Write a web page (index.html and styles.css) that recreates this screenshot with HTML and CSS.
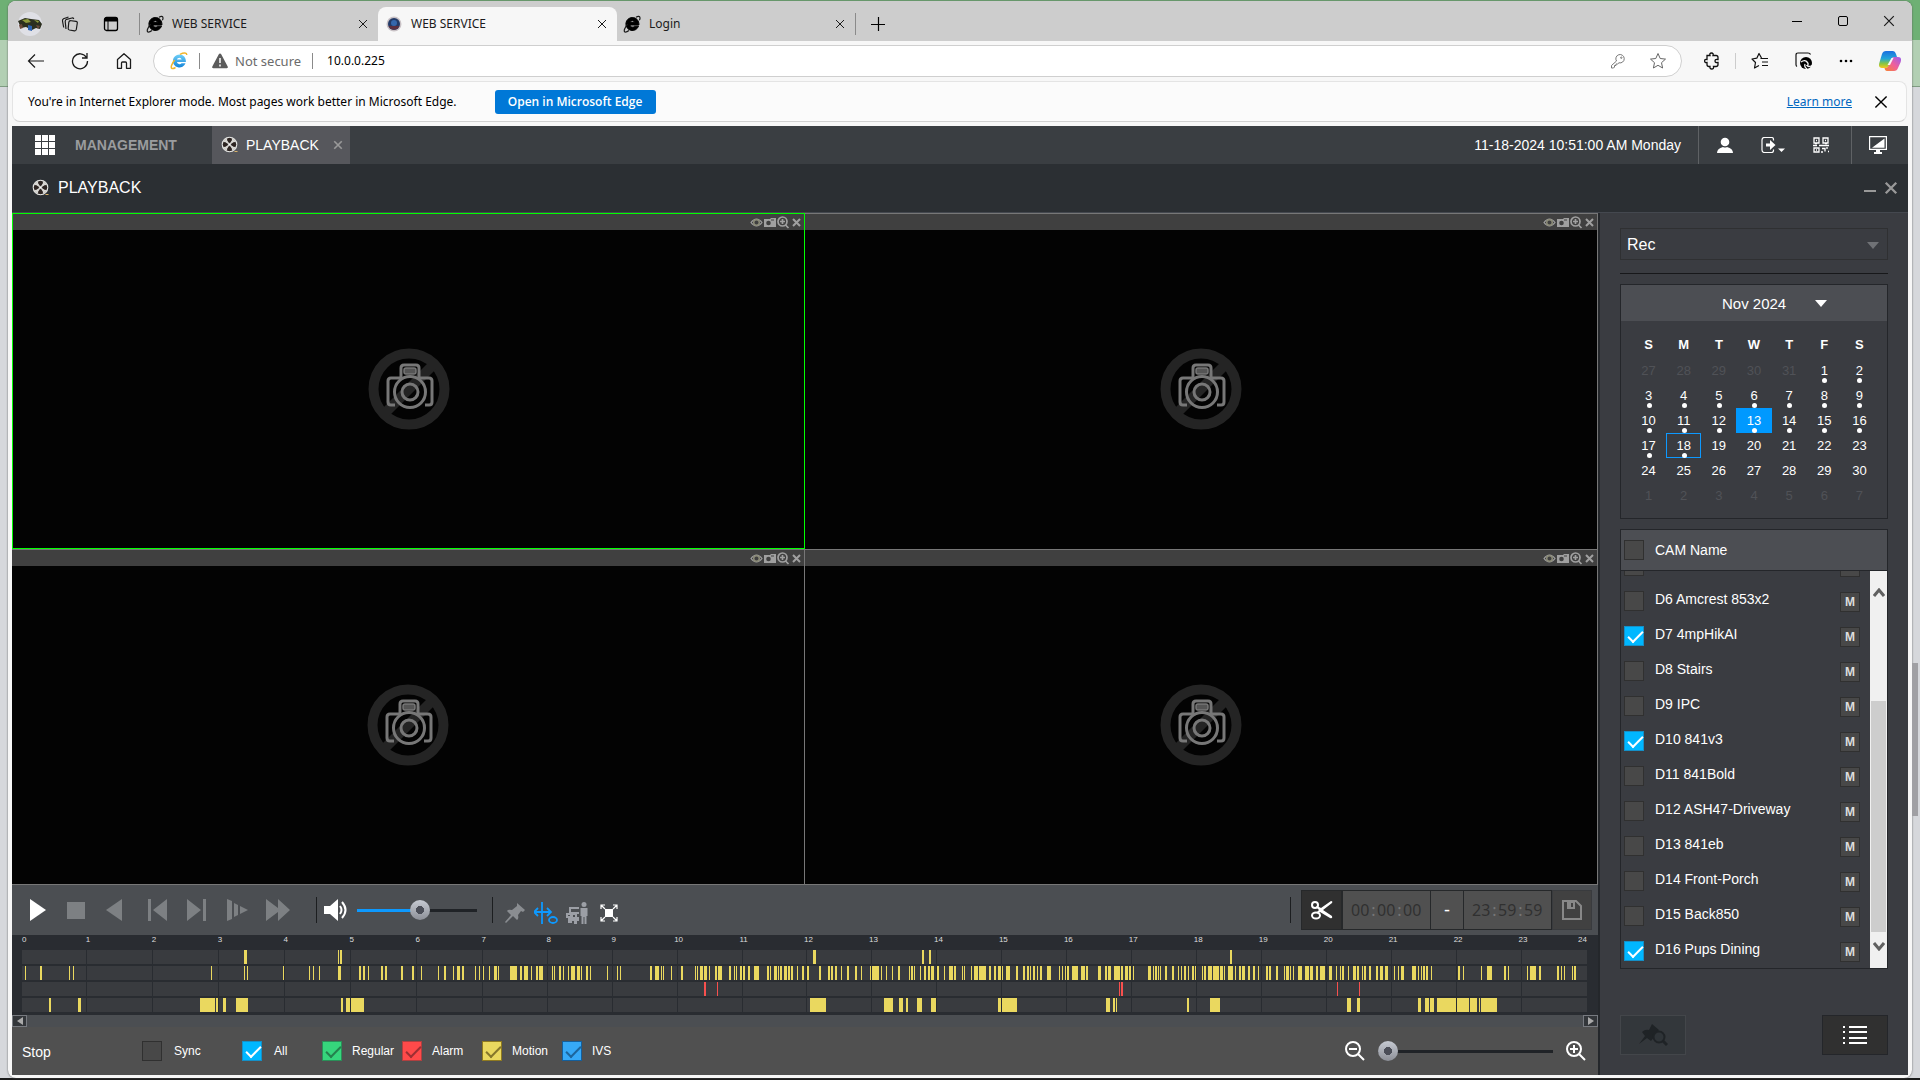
FILE: index.html
```html
<!DOCTYPE html>
<html lang="en">
<head>
<meta charset="utf-8">
<title>WEB SERVICE</title>
<link rel="stylesheet" href="styles.css">
</head>
<body>
<svg class="defs" aria-hidden="true">
  <defs>
    <linearGradient id="ieBlue" x1="0" y1="0" x2="0" y2="1"><stop offset="0" stop-color="#6fd0f8"/><stop offset="1" stop-color="#1584d8"/></linearGradient>
    <linearGradient id="cpTop" x1="0" y1="0" x2="0" y2="1"><stop offset="0" stop-color="#1b6fe0"/><stop offset=".45" stop-color="#22a6d8"/><stop offset=".75" stop-color="#8cc63f"/><stop offset="1" stop-color="#f7c81e"/></linearGradient>
    <linearGradient id="cpBottom" x1="1" y1="0" x2="0" y2="1"><stop offset="0" stop-color="#9a5cf0"/><stop offset=".5" stop-color="#f0609a"/><stop offset="1" stop-color="#f7842e"/></linearGradient>
    <symbol id="x" viewBox="0 0 10 10"><path d="M1 1l8 8M9 1l-8 8" fill="none" stroke="currentColor"/></symbol>
    <symbol id="xb" viewBox="0 0 12 12"><path d="M1.500 1.500l9 9M10.500 1.500l-9 9" fill="none" stroke="currentColor" stroke-width="2"/></symbol>
    <symbol id="ie" viewBox="0 0 18 18"><path d="M9.300 2.500a6.500 6.500 0 1 0 6.200 8.700h-4a2.600 2.600 0 0 1-4.600-1.200h9C16.200 5.600 13.300 2.500 9.300 2.500zM6.900 7.600a2.500 2.500 0 0 1 4.800 0z" fill="#000" fill-rule="evenodd" stroke="#000"/><path d="M13 2.200c2.200-1.200 3.800-1 4 .6.100.8-.2 1.700-.6 2.500M4.600 9.200C1.500 12.800.4 16.500 2 17c1 .3 2.500-.4 4-1.500" fill="none" stroke="currentColor" stroke-width="1.200"/></symbol>
    <symbol id="film" viewBox="0 0 18 18"><circle cx="8.500" cy="8.500" r="7.200" fill="#3b3634" stroke="#e2e2e0" stroke-width="1.300"/><g transform="rotate(45 8.500 8.500)"><g fill="#d8d7d3"><path d="M8.500 8.500L6 1.700h5zM8.500 8.500L6 15.300h5zM8.500 8.500L1.700 6v5zM8.500 8.500l6.800-2.500v5z"/></g><g fill="#2d2421"><circle cx="5.300" cy="5.300" r="2.200"/><circle cx="11.700" cy="5.300" r="2.200"/><circle cx="5.300" cy="11.700" r="2.200"/><circle cx="11.700" cy="11.700" r="2.200"/></g></g><circle cx="8.500" cy="8.500" r="1.200" fill="#fff"/><path d="M13.500 15.500h3" stroke="#d8b26a"/></symbol>
    <symbol id="tools" viewBox="0 0 52 14"><g fill="none" stroke="#a0a0a0"><path d="M1 7.500q5.500-7 11 0q-5.500 7-11 0z" stroke-width="1.200"/><circle cx="6.500" cy="7.500" r="2.800" stroke="#8c8c78" stroke-width="1.500"/><circle cx="32.500" cy="6.500" r="4.500" stroke-width="1.700"/><path d="M30 6.500h5M32.500 4v5M35.500 10l3 3" stroke-width="1.700"/><path d="M43 4l7 7M50 4l-7 7" stroke-width="2"/></g><path d="M14 4h6l1-1h5v9H14z" fill="#a0a0a0"/><circle cx="18.500" cy="8" r="2.300" fill="#404040"/><path d="M21 5h3" stroke="#404040"/></symbol>
    <symbol id="nocam" viewBox="0 0 82 82"><circle cx="41" cy="41" r="35.500" fill="none" stroke="#242424" stroke-width="10"/><path d="M64 18L18 64" stroke="#242424" stroke-width="10"/><g fill="none" stroke="#777" stroke-width="3"><path d="M27 57h-4q-3 0-3-3V33q0-3 3-3h10V20q0-3 3-3h12q3 0 3 3v10h10q3 0 3 3v21q0 3-3 3h-4"/><circle cx="42" cy="44" r="15.500"/><circle cx="42" cy="44" r="8"/></g><rect x="36" y="20" width="12" height="6" rx="2" fill="#555" stroke="#777" stroke-width="1.500"/></symbol>
  </defs>
</svg>

<div class="browser">
  <header class="tabstrip">
    <div class="strip-tools">
      <button class="plain" aria-label="Profile"><svg width="26" height="26" viewBox="0 0 26 26"><circle cx="13" cy="13" r="12" fill="#dfe0e6"/><path d="M1 10l7-3 6 1 8 1 3 4-2 5-4-1-4 2-6-3-5 1z" fill="#2c2f1f"/><path d="M5 9l6-1 3 3-5 1zM17 9l5 1-1 2z" fill="#8d9a3c"/><path d="M11 14l4 1v5l-4-1z" fill="#2d62b0"/><path d="M2 14l3-1 1 4-3 1zM19 14l4 1-2 3z" fill="#6c4a3a"/></svg></button>
      <button class="plain" aria-label="Workspaces"><svg width="18" height="18" viewBox="0 0 18 18" fill="none" stroke="#1b1b1b" stroke-width="1.200"><path d="M8.500 5.500l6.500.8q1.500.2 1.300 1.700l-1 6.500q-.3 1.500-1.800 1.300l-5-.8q-1.500-.3-1.300-1.700l.6-6q.2-1.500 1.700-1.300M5 14l-.8-7.500q0-1.700 1.500-2.200L11 3q1.300-.2 1.800 1M2.700 12.500L1.500 6q-.3-1.500 1-2.200L7.500 2"/></svg></button>
      <button class="plain" aria-label="Tab actions"><svg width="16" height="16" viewBox="0 0 16 16"><rect x="1.500" y="1.500" width="13" height="13" rx="2" fill="none" stroke="#000" stroke-width="1.300"/><path d="M1.500 5.500V3q0-1.500 1.500-1.500h10q1.500 0 1.500 1.500v2.500z"/><path d="M5 5v9" stroke="#000"/></svg></button>
    </div>
    <div class="tab"><svg width="18" height="18"><use href="#ie"/></svg><span>WEB SERVICE</span><button class="plain" aria-label="Close tab"><svg width="10" height="10"><use href="#x"/></svg></button></div>
    <div class="tab tab-active"><svg width="18" height="18" viewBox="0 0 18 18"><circle cx="9" cy="9" r="7.500" fill="#c9c2c6"/><circle cx="9" cy="9" r="6" fill="#233a68"/><circle cx="9" cy="8" r="3" fill="#3567ac"/><path d="M3.500 11h11a6 6 0 0 1-11 0z" fill="#5c3040"/></svg><span>WEB SERVICE</span><button class="plain" aria-label="Close tab"><svg width="10" height="10"><use href="#x"/></svg></button></div>
    <div class="tab tab-last"><svg width="18" height="18"><use href="#ie"/></svg><span>Login</span><button class="plain" aria-label="Close tab"><svg width="10" height="10"><use href="#x"/></svg></button></div>
    <button class="plain new-tab" aria-label="New tab"><svg width="16" height="16" viewBox="0 0 16 16"><path d="M8.500 1v14M1 8.500h14" stroke="#000" stroke-width="1.200"/></svg></button>
    <div class="win-buttons">
      <button class="plain" aria-label="Minimize"><svg width="10" height="10"><path d="M0 5.500h10" stroke="#000"/></svg></button>
      <button class="plain" aria-label="Maximize"><svg width="10" height="10"><rect x=".5" y=".5" width="9" height="9" rx="1.500" fill="none" stroke="#000"/></svg></button>
      <button class="plain" aria-label="Close"><svg width="12" height="12"><use href="#x"/></svg></button>
    </div>
  </header>

  <div class="toolbar">
    <div class="nav-buttons">
      <button class="plain" aria-label="Back"><svg width="18" height="18" viewBox="0 0 18 18" fill="none" stroke="#1b1b1b" stroke-width="1.200"><path d="M17 9H1.500M8 2.500L1.500 9 8 15.500"/></svg></button>
      <button class="plain" aria-label="Refresh"><svg width="18" height="18" viewBox="0 0 18 18" fill="none" stroke="#1b1b1b" stroke-width="1.300"><path d="M15.500 5.500A7.500 7.500 0 1 0 16.500 9M16 1v5h-5"/></svg></button>
      <button class="plain" aria-label="Home"><svg width="18" height="18" viewBox="0 0 18 18" fill="none" stroke="#1b1b1b" stroke-width="1.300"><path d="M2.500 7.500L9 1.700l6.500 5.800v8.800h-4V11q0-1-1-1h-3q-1 0-1 1v5.300h-4z" stroke-linejoin="round"/></svg></button>
    </div>
    <div class="address">
      <svg width="18" height="18" viewBox="0 0 18 18"><path d="M9.300 2.500a6.500 6.500 0 1 0 6.200 8.700h-4a2.600 2.600 0 0 1-4.600-1.200h9C16.200 5.600 13.300 2.500 9.300 2.500zM6.900 7.600a2.500 2.500 0 0 1 4.800 0z" fill="url(#ieBlue)" fill-rule="evenodd"/><path d="M10 2.300c4-2 6.800-1.700 6.800.6M4.600 8C1.500 12 .4 16 2 16.500c1 .3 2.500-.4 3.500-1" fill="none" stroke="#f3b62c" stroke-width="1.500"/></svg>
      <i class="bar"></i>
      <svg width="18" height="18" viewBox="0 0 18 18"><path d="M9 1.500q.8 0 1.200.8l6.500 12.200q.8 1.800-1 1.800H2.300q-1.800 0-1-1.800L7.800 2.300q.4-.8 1.200-.8z" fill="#5c5c5c"/><path d="M9 6v5M9 12.500v2" stroke="#fff" stroke-width="1.500"/></svg>
      <span class="muted">Not secure</span>
      <i class="bar"></i>
      <input class="url" aria-label="Address" value="10.0.0.225">
      <button class="plain" aria-label="Passwords"><svg width="16" height="16" viewBox="0 0 16 16" fill="none" stroke="#777"><path d="M6.500 8A4.200 4.200 0 1 1 9 9.800L7.500 11H6v1.500H4.500V14L3.500 15H1.500v-2.500z"/><circle cx="11.300" cy="4.700" r=".7"/></svg></button>
      <button class="plain" aria-label="Favorite"><svg width="18" height="18" viewBox="0 0 18 18" fill="none" stroke="#666"><path d="M9 1.500l2.200 5 5.300.6-4 3.600 1.100 5.300L9 13.300 4.400 16l1.100-5.300-4-3.600 5.300-.6z" stroke-linejoin="round"/></svg></button>
    </div>
    <div class="browser-tools">
      <button class="plain" aria-label="Extensions"><svg width="16" height="18" viewBox="0 0 16 18" fill="none" stroke="#111" stroke-width="1.300"><path d="M3 3.500h3q-.7-2.500 1.500-2.500T9 3.500h3q2 0 2 2v2q-3-.6-3 1.500t3 1.500v2q0 2-2 2H9.500q.5 2.500-1.700 2.500T6 14.500H5q-2 0-2-2v-2q-2.400.5-2.400-1.500T3 7.500z"/></svg></button>
      <i class="bar"></i>
      <button class="plain" aria-label="Favorites"><svg width="18" height="18" viewBox="0 0 18 18" fill="none" stroke="#111" stroke-width="1.200"><path d="M10.500 6L8 1.500 5.800 6.200 1 7l3.500 3.500L3.500 16 8 13.500M9.500 6.500h7.500M11 10h6M11 13.500h6" stroke-linejoin="round"/></svg></button>
      <button class="plain" aria-label="Internet Explorer mode"><svg width="18" height="18" viewBox="0 0 18 18"><path d="M2 14.500q-1-.5-1-2V3q0-2 2-2h10q2 0 2.500 1.500" fill="none" stroke="#111" stroke-width="1.200"/><circle cx="11" cy="11" r="6" /><path d="M6 10q4-3 6.500.5 1.500 2-.5 3 2 2 5 0M10 12q-1 3 2 5" fill="none" stroke="#f7f7f7" stroke-width="1.300"/></svg></button>
      <button class="plain" aria-label="Settings"><svg width="14" height="4" viewBox="0 0 14 4"><circle cx="2" cy="2" r="1.300"/><circle cx="7" cy="2" r="1.300"/><circle cx="12" cy="2" r="1.300"/></svg></button>
      <button class="plain" aria-label="Copilot"><svg width="22" height="20" viewBox="0 0 22 20"><path d="M7 0h7q2 0 3 3l1 3h-3q-2 0-3 3l-2 6q-1 2-3 2H3q-4 0-2.700-5L3 3q1-3 4-3z" fill="url(#cpTop)"/><path d="M15 20H8q-2 0-2.500-3H7q2 0 3-3l2-5q1-3 3-3h4q4 0 2.700 5L19 17q-1 3-4 3z" fill="url(#cpBottom)"/><path d="M12.500 7h2L11 14H8.500z" fill="#f7f7f7"/></svg></button>
    </div>
  </div>

  <div class="infobar">
    <span>You're in Internet Explorer mode. Most pages work better in Microsoft Edge.</span>
    <button class="edge-button">Open in Microsoft Edge</button>
    <a class="learn" href="#learn">Learn more</a>
    <button class="plain" aria-label="Dismiss"><svg width="14" height="14"><use href="#x"/></svg></button>
  </div>

  <div class="app">
    <nav class="app-nav">
      <button class="plain grid-button" aria-label="Menu"><svg width="20" height="20" viewBox="0 0 20 20" fill="#fff"><path d="M0 0h6v6H0zM7 0h6v6H7zM14 0h6v6h-6zM0 7h6v6H0zM7 7h6v6H7zM14 7h6v6h-6zM0 14h6v6H0zM7 14h6v6H7zM14 14h6v6h-6z"/></svg></button>
      <a class="nav-link" href="#management">MANAGEMENT</a>
      <div class="nav-tab"><svg width="18" height="18"><use href="#film"/></svg><span>PLAYBACK</span><button class="plain" aria-label="Close playback"><svg width="10" height="10"><use href="#xb"/></svg></button></div>
      <time class="clock">11-18-2024 10:51:00 AM Monday</time>
      <div class="nav-group">
        <button class="plain" aria-label="User"><svg width="16" height="16" viewBox="0 0 16 16" fill="#fff"><circle cx="8" cy="5" r="4.300"/><path d="M0 16q0-4.500 6-6 2 1 4 0 6 1.500 6 6z"/></svg></button>
        <button class="plain" aria-label="Log out"><svg width="24" height="16" viewBox="0 0 24 16"><path d="M12.500 3.500V2.500q0-2-2-2h-7q-2.500 0-2.500 2.500v10q0 2.500 2.500 2.500h7q2 0 2-2v-1" fill="none" stroke="#fff" stroke-width="1.200"/><path d="M5 6.500h4V3l5.500 5L9 13V9.500H5z" fill="#fff"/><path d="M17 11.500h7L20.500 15z" fill="#fff"/></svg></button>
        <button class="plain" aria-label="QR code"><svg width="16" height="16" viewBox="0 0 16 16" fill="none" stroke="#fff" stroke-width="1.300"><path d="M1 1h5v5H1zM10 1h5v5h-5zM1 11h5v4H1zM3 3.500h1M12 3.500h1M3 13h1M0 8.500h4M6 8.500h10M9 11.500h3v3M14 10v2M15 14.500h1M8 15h2M2 6.500h2M12 6.500h2"/></svg></button>
      </div>
      <button class="plain screen-button" aria-label="Display"><svg width="18" height="18" viewBox="0 0 18 18"><path d="M.6.6h16.800v12.800H.6z" fill="none" stroke="#fff" stroke-width="1.200"/><path d="M15.500 2.500v9.300H3zM7 14h4v2h2v2H5v-2h2z" fill="#fff"/></svg></button>
    </nav>
    <div class="page-title">
      <svg width="18" height="18"><use href="#film"/></svg><h1>PLAYBACK</h1>
      <button class="plain" aria-label="Minimize page"><svg width="12" height="12"><path d="M0 9h12" stroke="#999" stroke-width="2"/></svg></button>
      <button class="plain" aria-label="Close page"><svg width="14" height="14"><use href="#xb"/></svg></button>
    </div>

    <div class="content">
      <main class="player">
        <div class="views">
          <section class="view view-selected"><div class="view-bar"><svg width="52" height="14"><use href="#tools"/></svg></div><div class="view-body"><svg width="82" height="82"><use href="#nocam"/></svg></div></section>
          <section class="view"><div class="view-bar"><svg width="52" height="14"><use href="#tools"/></svg></div><div class="view-body"><svg width="82" height="82"><use href="#nocam"/></svg></div></section>
          <section class="view"><div class="view-bar"><svg width="52" height="14"><use href="#tools"/></svg></div><div class="view-body"><svg width="82" height="82"><use href="#nocam"/></svg></div></section>
          <section class="view"><div class="view-bar"><svg width="52" height="14"><use href="#tools"/></svg></div><div class="view-body"><svg width="82" height="82"><use href="#nocam"/></svg></div></section>
        </div>

        <div class="controls">
          <div class="transport">
            <button class="plain" aria-label="Play"><svg width="24" height="22" viewBox="0 0 24 22"><path d="M4 0l16 11L4 22z" fill="#fff"/></svg></button>
            <button class="plain" aria-label="Stop"><svg width="24" height="22" viewBox="0 0 24 22"><path d="M3 3h18v17H3z"/></svg></button>
            <button class="plain" aria-label="Reverse"><svg width="24" height="22" viewBox="0 0 24 22"><path d="M20 0L4 11l16 11z"/></svg></button>
            <button class="plain gap-l" aria-label="Previous frame"><svg width="24" height="22" viewBox="0 0 24 22"><path d="M2 0h3v22H2zM21 0L7 11l14 11z"/></svg></button>
            <button class="plain" aria-label="Next frame"><svg width="24" height="22" viewBox="0 0 24 22"><path d="M19 0h3v22h-3zM3 0l14 11L3 22z"/></svg></button>
            <button class="plain gap-s" aria-label="Slow"><svg width="24" height="22" viewBox="0 0 24 22"><path d="M2 0l5 2v18l-5 2zM9 4l4 2v10l-4 2zM15 7l8 4-8 4z"/></svg></button>
            <button class="plain gap-s" aria-label="Fast"><svg width="24" height="22" viewBox="0 0 24 22"><path d="M0 0l12 9V0l12 11-12 11v-9L0 22z"/></svg></button>
          </div>
          <div class="volume">
            <button class="plain" aria-label="Mute"><svg width="24" height="22" viewBox="0 0 24 22"><path d="M0 7h6l8-7v22l-8-7H0z" fill="#fff"/><path d="M16 7q3 4 0 8M18 3q7 8 0 16" fill="none" stroke="#fff" stroke-width="2"/></svg></button>
            <input class="slider slider-volume" type="range" min="0" max="100" value="53" aria-label="Volume">
          </div>
          <div class="modes">
            <button class="plain" aria-label="Pin"><svg width="22" height="22" viewBox="0 0 22 22" fill="#8a8d91"><path d="M13 1l8 7-2 2-2-1-3 4q1 4-1 5l-4-4-7 7-1-1 6-7-4-4q1-2 5-1l5-4z"/></svg></button>
            <button class="plain" aria-label="Sync mark"><svg width="24" height="22" viewBox="0 0 24 22" fill="none" stroke="#0d99ff" stroke-width="1.800"><path d="M8 0v22M0 10h17M4 6l-4 4 4 4M13 6l4 4-4 4"/><ellipse cx="19" cy="18" rx="4" ry="3"/></svg></button>
            <button class="plain" aria-label="Smart filter"><svg width="22" height="22" viewBox="0 0 22 22" fill="#9c9fa6"><circle cx="18" cy="2.500" r="2.500"/><path d="M14.500 6h7v8h-1v8h-2v-7h-1v7h-2v-8h-1z"/><path d="M3 5h10v2H5v3h8v2h-2v3h2v4h-2v3H8v-3H6v2H2v-5H0v-5h3zM2 13v1h2v-1zM7 13v2h2v-2z" fill-rule="evenodd"/></svg></button>
            <button class="plain" aria-label="Full screen"><svg width="18" height="18" viewBox="0 0 18 18"><path d="M5 5h8v8H5z" fill="#fff"/><path d="M1 5V1h4M13 1h4v4M17 13v4h-4M5 17H1v-4M1 1l4 4M17 1l-4 4M17 17l-4-4M1 17l4-4" fill="none" stroke="#fff" stroke-width="1.200"/></svg></button>
          </div>
          <div class="clip">
            <button class="clip-cut" aria-label="Cut"><svg width="22" height="20" viewBox="0 0 22 20"><g fill="none" stroke="#fff" stroke-width="2"><circle cx="4" cy="5" r="3"/><ellipse cx="5" cy="15.500" rx="4" ry="3"/></g><path d="M6 6l4 2 10-7q2 0 1 2l-9 7 9 6q1 3-2 2L9 12l-2 2-1-2 2-2-3-3z" fill="#fff"/></svg></button>
            <div class="clip-time"><input aria-label="Start hour" value="00"><i>:</i><input aria-label="Start minute" value="00"><i>:</i><input aria-label="Start second" value="00"></div>
            <span class="clip-dash">-</span>
            <div class="clip-time"><input aria-label="End hour" value="23"><i>:</i><input aria-label="End minute" value="59"><i>:</i><input aria-label="End second" value="59"></div>
            <button class="clip-save" aria-label="Save"><svg width="20" height="20" viewBox="0 0 20 20"><path d="M1 1h13l5 5v13H1z" fill="none" stroke="#888" stroke-width="2"/><path d="M5 1h8v8H5z" fill="#888"/><path d="M9 3h2v4H9z" fill="#414141"/></svg></button>
          </div>
        </div>

        <div class="timeline">
          <div class="hours" id="hours"></div>
          <div class="tracks" id="tracks"></div>
        </div>
        <div class="scroll-x">
          <button aria-label="Scroll left"><svg width="6" height="8"><path d="M6 0v8L0 4z" fill="#aaa"/></svg></button>
          <button aria-label="Scroll right"><svg width="6" height="8"><path d="M0 0v8l6-4z" fill="#aaa"/></svg></button>
        </div>

        <footer class="filters">
          <span class="status">Stop</span>
          <label class="filter filter-sync"><input class="check" type="checkbox"><span>Sync</span></label>
          <label class="filter"><input class="check" type="checkbox" checked><span>All</span></label>
          <label class="filter"><input class="check check-green" type="checkbox" checked><span>Regular</span></label>
          <label class="filter"><input class="check check-red" type="checkbox" checked><span>Alarm</span></label>
          <label class="filter"><input class="check check-yellow" type="checkbox" checked><span>Motion</span></label>
          <label class="filter"><input class="check check-blue" type="checkbox" checked><span>IVS</span></label>
          <div class="zoom">
            <button class="plain" aria-label="Zoom out"><svg width="20" height="20" viewBox="0 0 20 20" fill="none" stroke="#fff" stroke-width="2"><circle cx="8" cy="8" r="7"/><path d="M4 8h8M13 13l6 6"/></svg></button>
            <input class="slider slider-zoom" type="range" min="0" max="100" value="0" aria-label="Timeline zoom">
            <button class="plain" aria-label="Zoom in"><svg width="20" height="20" viewBox="0 0 20 20" fill="none" stroke="#fff" stroke-width="2"><circle cx="8" cy="8" r="7"/><path d="M4 8h8M8 4v8M13 13l6 6"/></svg></button>
          </div>
        </footer>
      </main>

      <aside class="sidebar">
        <div class="select-wrap"><select aria-label="Record type"><option>Rec</option></select></div>
        <section class="calendar">
          <button class="month">Nov 2024<i class="caret"></i></button>
          <table>
            <thead><tr><th>S</th><th>M</th><th>T</th><th>W</th><th>T</th><th>F</th><th>S</th></tr></thead>
            <tbody>
              <tr><td class="off">27</td><td class="off">28</td><td class="off">29</td><td class="off">30</td><td class="off">31</td><td class="rec">1</td><td class="rec">2</td></tr>
              <tr><td class="rec">3</td><td class="rec">4</td><td class="rec">5</td><td class="rec">6</td><td class="rec">7</td><td class="rec">8</td><td class="rec">9</td></tr>
              <tr><td class="rec">10</td><td class="rec">11</td><td class="rec">12</td><td class="rec picked">13</td><td class="rec">14</td><td class="rec">15</td><td class="rec">16</td></tr>
              <tr><td class="rec">17</td><td class="rec today">18</td><td>19</td><td>20</td><td>21</td><td>22</td><td>23</td></tr>
              <tr><td>24</td><td>25</td><td>26</td><td>27</td><td>28</td><td>29</td><td>30</td></tr>
              <tr><td class="off">1</td><td class="off">2</td><td class="off">3</td><td class="off">4</td><td class="off">5</td><td class="off">6</td><td class="off">7</td></tr>
            </tbody>
          </table>
        </section>
        <section class="cams">
          <label class="cam-head"><input class="check" type="checkbox"><span>CAM Name</span></label>
          <div class="cam-body">
            <ul>
              <li><label><input class="check" type="checkbox" aria-label="Channel 5"></label><button aria-label="Main stream"></button></li>
              <li><label><input class="check" type="checkbox"><span>D6 Amcrest 853x2</span></label><button>M</button></li>
              <li><label><input class="check" type="checkbox" checked><span>D7 4mpHikAI</span></label><button>M</button></li>
              <li><label><input class="check" type="checkbox"><span>D8 Stairs</span></label><button>M</button></li>
              <li><label><input class="check" type="checkbox"><span>D9 IPC</span></label><button>M</button></li>
              <li><label><input class="check" type="checkbox" checked><span>D10 841v3</span></label><button>M</button></li>
              <li><label><input class="check" type="checkbox"><span>D11 841Bold</span></label><button>M</button></li>
              <li><label><input class="check" type="checkbox"><span>D12 ASH47-Driveway</span></label><button>M</button></li>
              <li><label><input class="check" type="checkbox"><span>D13 841eb</span></label><button>M</button></li>
              <li><label><input class="check" type="checkbox"><span>D14 Front-Porch</span></label><button>M</button></li>
              <li><label><input class="check" type="checkbox"><span>D15 Back850</span></label><button>M</button></li>
              <li><label><input class="check" type="checkbox" checked><span>D16 Pups Dining</span></label><button>M</button></li>
            </ul>
            <div class="scroll-y">
              <svg width="12" height="10"><path d="M1 8l5-6 5 6" fill="none" stroke="#606060" stroke-width="3"/></svg>
              <i></i>
              <svg width="12" height="10"><path d="M1 2l5 6 5-6" fill="none" stroke="#606060" stroke-width="3"/></svg>
            </div>
          </div>
        </section>
        <div class="side-actions">
          <button class="side-pin" aria-label="Search marks" disabled><svg width="30" height="24" viewBox="0 0 30 24"><path d="M14 1l7 6-2 3-6 8-4-3-8 6 6-8-3-4q3-3 7-2z" fill="#1f2326"/><circle cx="21" cy="14" r="5.500" fill="#2f3438" stroke="#1f2326" stroke-width="2"/><path d="M25 18l4 4" stroke="#1f2326" stroke-width="3"/></svg></button>
          <button class="side-list" aria-label="File list"><svg width="24" height="18" viewBox="0 0 24 18"><path d="M6 1h18M6 6h18M6 12h18M6 17h18M0 1h2M0 6h2M0 12h2M0 17h2" stroke="#fff" stroke-width="2"/></svg></button>
        </div>
      </aside>
    </div>
  </div>
</div>
<div class="page-thumb"></div>
<script src="timeline.js"></script>
</body>
</html>
```

FILE: styles.css
```css
* { box-sizing: border-box; }
html { height: 100%; }
body {
  position: relative;
  margin: 0;
  min-height: 100%;
  padding: 1px 8px 2px;
  display: flex;
  background: linear-gradient(#6eb074 0 40px, #b2cfb3 40px 86px, #7f9c82 86px 87px, #d6d8dc 87px calc(100% - 2px), #1b1b1b calc(100% - 2px));
  font-family: "Liberation Sans", Arial, sans-serif;
}
svg { display: block; flex: none; }
.defs { position: absolute; width: 0; height: 0; }
button, input, select { font: inherit; color: inherit; }
.plain { display: flex; align-items: center; justify-content: center; padding: 0; border: 0; background: none; flex: none; }
.bar { width: 1px; height: 16px; background: #8a8a8a; flex: none; }

.browser {
  flex: 1;
  min-width: 0;
  display: flex;
  flex-direction: column;
  background: #f7f7f7;
  border-radius: 8px;
  overflow: hidden;
  padding-bottom: 3px;
  box-shadow: 0 0 2px #555;
}
.tabstrip, .toolbar, .infobar { font: 12px/16px "Noto Sans", "Open Sans", sans-serif; color: #1b1b1b; }

/* Tab strip */
.tabstrip { display: flex; align-items: flex-end; height: 40px; background: #cdcdcd; }
.strip-tools { display: flex; align-items: center; gap: 18px; height: 34px; width: 131px; padding-left: 9px; }
.strip-tools .plain:last-child { margin-left: 6px; }
.tab { display: flex; align-items: center; gap: 8px; width: 239px; height: 34px; padding: 0 10px 0 6px; border-left: 1px solid transparent; }
.tab:nth-child(2) { border-image: linear-gradient(transparent 7px, #8a8a8a 7px 27px, transparent 27px) 1; }
.tab span { flex: 1; }
.tab-active { background: #f7f7f7; border-radius: 8px 8px 0 0; }
.tab-last { border-image: linear-gradient(transparent 7px, #8a8a8a 7px 27px, transparent 27px) 1; border-left: 0; border-right: 1px solid; }
.new-tab { width: 44px; height: 34px; }
.win-buttons { display: flex; align-items: center; margin-left: auto; height: 40px; }
.win-buttons .plain { width: 46px; height: 40px; }

/* Toolbar */
.toolbar { display: flex; align-items: center; height: 40px; }
.nav-buttons { display: flex; gap: 26px; width: 145px; padding-left: 19px; }
.address { flex: 1; display: flex; align-items: center; height: 32px; padding: 0 14px 0 16px; gap: 11px; background: #fff; border: 1px solid #cfcfcf; border-radius: 16px; font-size: 13px; }
.muted { color: #6b6b6b; margin-left: -5px; }
.url { flex: 1; min-width: 0; border: 0; padding: 0 3px; outline: 0; color: #000; font-size: 12px; background: none; }
.address .plain + .plain { margin-left: 12px; }
.browser-tools { display: flex; align-items: center; gap: 26px; padding: 0 11px 0 22px; }
.browser-tools .bar { margin: 0 -11px; background: #ccc; }

/* Internet Explorer mode bar */
.infobar { display: flex; align-items: center; height: 41px; margin: 0 5px 4px 4px; padding: 0 18px 0 15px; background: #fbfbfb; border: 1px solid #e4e4e4; border-bottom-color: #d0d0d0; border-radius: 8px; color: #000; }
.edge-button { margin-left: 38px; width: 161px; height: 24px; padding: 0; border: 0; border-radius: 3px; background: #0078d7; color: #fff; font-family: "Open Sans", sans-serif; font-weight: 600; }
.learn { margin: 0 22px 0 auto; color: #0067c0; }

/* Web application */
.app { flex: 1; display: flex; flex-direction: column; margin: 0 4px; background: #2b2f33; color: #fff; font-size: 14px; }
.app-nav { display: flex; align-items: center; height: 38px; background: #3a3e42; }
.grid-button { width: 63px; height: 38px; padding-left: 3px; }
.nav-link { width: 137px; color: #9a9c9e; font-weight: bold; text-decoration: none; }
.nav-tab { display: flex; align-items: center; gap: 7px; width: 138px; height: 38px; padding: 0 7px 0 9px; background: #56575c; }
.nav-tab span { flex: 1; }
.nav-tab .plain, .page-title .plain { color: #999; }
.clock { margin-left: auto; padding-right: 17px; }
.nav-group { display: flex; align-items: center; gap: 28px; height: 38px; padding: 0 22px 0 18px; border: solid #5f6265; border-width: 0 1px; }
.screen-button { width: 56px; height: 38px; padding-right: 4px; }
.page-title { display: flex; align-items: center; gap: 8px; height: 49px; padding: 0 10px 0 20px; border-bottom: 1px solid #44484f; }
.page-title h1 { flex: 1; margin: 0; font-size: 16px; font-weight: normal; }
.content { flex: 1; display: flex; min-height: 0; }
.player { flex: 1; min-width: 0; display: flex; flex-direction: column; }

/* Camera views */
.views { flex: 1; display: grid; grid-template: 1fr 1fr / 1fr 1fr; min-height: 360px; background: #000; border-bottom: 1px solid #777; }
.view { display: flex; flex-direction: column; border: 1px solid #777; border-width: 1px 1px 0 0; }
.view-selected { border: 1px solid #0f0; }
.view-bar { display: flex; align-items: center; justify-content: flex-end; height: 16px; padding-right: 2px; background: #404040; }
.view-body { flex: 1; display: flex; align-items: center; justify-content: center; background: #030303; }

/* Player controls */
.controls { display: flex; align-items: center; height: 50px; padding: 0 6px 0 14px; background: #4b4e52; }
.transport { display: flex; gap: 14px; fill: #7d8083; width: 290px; }
.gap-l { margin-left: 6px; }
.gap-s { margin-left: 3px; }
.volume { display: flex; align-items: center; gap: 9px; height: 26px; width: 176px; padding-left: 7px; border-left: 1px solid #1c1e20; }
.modes { display: flex; align-items: center; gap: 8px; height: 26px; padding: 6px 0 0 11px; border-left: 1px solid #1c1e20; }
.modes .plain:last-child { margin-left: 4px; }
.slider { -webkit-appearance: none; appearance: none; margin: 0; height: 20px; background: none; }
.slider-volume { width: 120px; }
.slider-zoom { width: 175px; }
.slider::-webkit-slider-runnable-track { height: 3px; background: #202327; }
.slider-volume::-webkit-slider-runnable-track { background: linear-gradient(90deg, #0d99ff 53%, #202327 53%); }
.slider::-webkit-slider-thumb { -webkit-appearance: none; width: 20px; height: 20px; margin-top: -9px; border-radius: 50%; background: radial-gradient(circle, #4b4e58 0 4px, transparent 4px), linear-gradient(#c6cad2, #8c8f97); }
.clip { display: flex; height: 40px; margin-left: auto; color: #303030; }
.clip::before { content: ""; width: 1px; height: 26px; margin: 7px 10px 0 0; background: #1c1e20; }
.clip > * { display: flex; align-items: center; justify-content: center; border: 1px solid #26282a; background: #505050; }
.clip-cut { width: 41px; padding: 0; }
.clip .clip-cut { background: #303030; }
.clip-time { width: 89px; font: 16px/24px "Noto Sans", sans-serif; }
.clip-time input { width: 19px; padding: 0; border: 0; background: none; }
.clip-time i { width: 7px; color: #777; font-style: normal; text-align: center; }
.clip .clip-dash { width: 32px; border-width: 1px 0; color: #fff; font-size: 18px; }
.clip .clip-save { width: 40px; padding: 0; background: #414141; border-color: #393b3e; }

/* Timeline */
.timeline { height: 80px; padding: 0 11px 0 10px; background: #292c31; }
.hours { display: grid; grid-template-columns: 65fr repeat(6, 66fr) repeat(17, 65fr); height: 15px; font-size: 8px; line-height: 10px; color: #ddd; }
.hours span { grid-row: 1; width: 16px; margin-left: -7px; text-align: center; }
.hours span:first-child { margin-left: 0; text-align: left; }
.hours span:nth-child(24) { grid-column: 24; }
.hours span:last-child { grid-column: 24; justify-self: end; text-align: right; }
.tracks { display: grid; gap: 2px; }
.tracks svg { width: 100%; height: 14px; background: #393b3f; shape-rendering: crispEdges; }
.track-line { fill: #292c31; }
.track-motion { fill: #ead85f; }
.track-alarm { fill: #f8504e; }
.scroll-x { display: flex; justify-content: space-between; height: 12px; background: #4b4e52; }
.scroll-x button { display: flex; align-items: center; justify-content: center; width: 15px; height: 12px; padding: 0; border: 1px solid #777a80; background: #33363a; }

/* Filters */
.filters { display: flex; align-items: center; height: 48px; padding: 0 12px 0 10px; background: #505050; }
.status { width: 120px; padding-top: 2px; }
.filter { display: flex; align-items: center; gap: 10px; width: 80px; font-size: 12px; }
.filter-sync { width: 100px; }
.filter:nth-child(-n+3) { gap: 12px; }
.zoom { display: flex; align-items: center; gap: 13px; margin-left: auto; }
.check { -webkit-appearance: none; appearance: none; flex: none; width: 20px; height: 20px; margin: 0; background: #484848; border: 1px solid #303030; color: #fff; }
.check:checked { background: #00b7ff; border-color: #1490c8; }
.check:checked::after { content: ""; display: block; width: 13px; height: 6px; margin: 4px 0 0 3px; border: solid currentColor; border-width: 0 0 2px 2px; transform: rotate(-45deg); }
.check-green:checked { background: #36d67c; border-color: #2a8f58; color: #25814d; }
.check-red:checked { background: #ff4a4a; border-color: #b04040; color: #9d2f33; }
.check-yellow:checked { background: #ead85f; border-color: #8f7a20; color: #85762c; }
.check-blue:checked { background: #36a9f7; border-color: #145f9c; color: #1d659c; }

/* Sidebar */
.sidebar { display: flex; flex-direction: column; width: 310px; padding: 15px 20px 20px; border-left: 2px solid #24272b; background: #3a3c41; }
.select-wrap { position: relative; padding-bottom: 13px; border-bottom: 1px solid #17181a; }
.select-wrap select { -webkit-appearance: none; appearance: none; display: block; width: 100%; height: 32px; padding: 0 6px; border: 1px solid #2f3032; border-radius: 0; background: none; font-size: 16px; }
.select-wrap::after { content: ""; position: absolute; right: 9px; top: 14px; border: 6px solid transparent; border-top: 7px solid #707276; border-bottom: 0; }
.calendar { margin-top: 10px; border: 1px solid #24262a; padding-bottom: 10px; }
.month { display: flex; align-items: center; width: 100%; height: 36px; padding: 0 0 0 101px; border: 0; background: #4c4e53; font-size: 15px; }
.caret { margin-left: 29px; border: 6px solid transparent; border-top: 7px solid #fff; border-bottom: 0; }
.calendar table { width: 246px; margin: 0 auto; border-collapse: collapse; table-layout: fixed; font-size: 13px; text-align: center; }
.calendar th { height: 37px; padding: 9px 0 0; }
.calendar td { position: relative; height: 25px; padding: 0; }
.calendar .off { color: #505257; }
.rec::after { content: ""; position: absolute; left: calc(50% - 2px); bottom: 0; width: 5px; height: 5px; border-radius: 50%; background: #fff; }
.picked { background: #0099ff; }
.today { box-shadow: inset 0 0 0 1px #0d99ff; }
.cams { flex: 1; display: flex; flex-direction: column; margin: 10px 0 46px; border: 1px solid #24262a; }
.cam-head { display: flex; align-items: center; gap: 11px; height: 41px; padding-left: 3px; background: #4c4e53; border-bottom: 1px solid #24262a; }
.cam-body { flex: 1; display: flex; }
.cams ul { flex: 1; display: flex; flex-direction: column; justify-content: flex-end; margin: 0; padding: 0 10px 0 3px; list-style: none; overflow: hidden; }
.cams li { flex: none; display: flex; align-items: center; justify-content: space-between; height: 35px; }
.cams li:first-child { margin-top: -23px; }
.cams li label { display: flex; gap: 11px; line-height: 16px; }
.cams li button { width: 20px; height: 20px; margin-top: 2px; padding: 0; border: 1px solid #303030; background: #484848; color: #ddd; font: bold 12px/18px "Liberation Sans", sans-serif; }
.scroll-y { width: 17px; display: flex; flex-direction: column; align-items: center; padding: 17px 0; background: #f0f0f0; }
.scroll-y i { flex: 1; align-self: stretch; margin: 103px 1px 9px; background: #cdcdcd; }
.side-actions { display: flex; justify-content: space-between; }
.side-actions button { display: flex; align-items: center; justify-content: center; width: 66px; height: 40px; padding: 0; border: 1px solid #24262a; background: #303030; }
.side-actions .side-pin { background: #33373b; border-color: #43464a; }
.page-thumb { position: absolute; right: 2px; top: 663px; width: 6px; height: 153px; background: #a0a0a4; }
```

FILE: timeline.js
```js
// Recording marks as start, end pairs. Each block has its own origin (px from
// midnight on a 1566px day) and the number of units it uses per pixel.
const DAY = 1566;
const blocks = [
  { origin: -22, scale: 2.45 },
  { origin: 618, scale: 2.45 },
  { origin: 1218, scale: 3 }
];
const tracks = [
  { kind: "motion", marks: [
    [598,605,828,831,833,838],
    [426,434,693,698,710,715,1448,1453],
    []
  ] },
  { kind: "motion", marks: [
    [61,64,98,103,169,171,179,181,517,519,598,600,605,608,693,696,757,759,767,769,782,784,828,835,880,884,889,894,902,904,933,938,943,948,982,987,1009,1014,1031,1034,1073,1076,1088,1093,1110,1112,1120,1127,1132,1137,1164,1166,1174,1176,1183,1186,1198,1200,1210,1218,1220,1223,1249,1267,1274,1279,1284,1294,1301,1303,1313,1318,1321,1330,1352,1355,1357,1360,1370,1374,1379,1382,1392,1394,1399,1409,1414,1421,1423,1426,1436,1441,1445,1448,1487,1490,1512,1514,1519,1521],
    [24,29,37,47,51,54,56,59,76,78,100,105,135,137,140,142,147,154,157,164,169,171,184,189,191,201,218,223,230,233,235,238,245,250,252,257,265,269,279,292,311,316,318,321,328,336,338,341,343,348,353,360,363,367,370,375,385,387,397,402,412,416,441,446,463,468,470,475,480,485,495,497,510,514,529,534,544,546,566,568,571,588,593,595,605,608,620,622,635,639,661,664,666,671,674,676,688,691,698,703,708,713,715,723,730,735,747,750,759,769,772,777,791,794,796,799,813,816,821,831,833,850,857,862,870,875,880,887,889,892,899,909,924,929,941,946,951,955,958,960,965,970,975,978,982,987,1000,1009,1029,1031,1036,1039,1044,1046,1049,1053,1061,1076,1083,1093,1095,1100,1125,1132,1142,1147,1149,1156,1164,1178,1181,1186,1191,1198,1200,1205,1210,1213,1247,1254,1259,1262,1264,1269,1272,1274,1276,1279,1289,1294,1306,1311,1321,1323,1328,1330,1335,1340,1345,1347,1355,1360,1362,1365,1379,1382,1384,1389,1394,1404,1406,1421,1423,1431,1433,1436,1443,1455,1460,1463,1470,1475,1477,1485,1492,1497,1504,1509,1517,1519,1536,1541,1543,1548,1561,1566],
    [135,138,141,150,153,156,162,165,177,189,198,210,213,222,231,237,243,258,270,279,291,294,303,306,309,315,327,330,342,351,354,360,369,372,375,381,390,396,411,417,423,432,438,447,465,468,477,480,486,495,519,531,537,540,546,549,552,558,561,567,576,579,657,663,672,675,726,729,744,759,795,801,807,810,864,867,873,891,900,906,954,960,966,969,975,978,999,1002,1005,1011]
  ] },
  { kind: "alarm", marks: [
    [],
    [157,162,189,191,1176,1178,1181,1186],
    [294,297,360,363]
  ] },
  { kind: "motion", marks: [
    [120,125,191,198,490,527,529,534,546,554,578,608,835,840,848,857,860,892],
    [419,458,600,622,637,647,654,659,681,693,715,728,880,887,889,926,1144,1154,1161,1166,1169,1171,1343,1347,1399,1423],
    [324,336,354,363,537,546,558,570,573,585,594,651,654,690,693,714,720,723,726,774]
  ] }
];

const hours = document.getElementById("hours");
for (let h = 0; h <= 24; h++) {
  const label = document.createElement("span");
  label.textContent = h;
  hours.append(label);
}

const SVG = "http://www.w3.org/2000/svg";
function rect(svg, x, width, name) {
  const r = document.createElementNS(SVG, "rect");
  r.setAttribute("x", x);
  r.setAttribute("width", width);
  r.setAttribute("height", 14);
  r.setAttribute("class", name);
  svg.append(r);
}

for (const track of tracks) {
  const svg = document.createElementNS(SVG, "svg");
  svg.setAttribute("viewBox", `0 0 ${DAY} 14`);
  svg.setAttribute("preserveAspectRatio", "none");
  for (let h = 1; h < 24; h++) rect(svg, h * 65 - 1 + Math.min(h - 1, 6), 1, "track-line");
  track.marks.forEach((list, i) => {
    const { origin, scale } = blocks[i];
    for (let k = 0; k < list.length; k += 2) {
      const from = Math.round(origin + list[k] / scale);
      const to = Math.round(origin + list[k + 1] / scale);
      rect(svg, from, Math.max(1, to - from), "track-" + track.kind);
    }
  });
  document.getElementById("tracks").append(svg);
}
```
